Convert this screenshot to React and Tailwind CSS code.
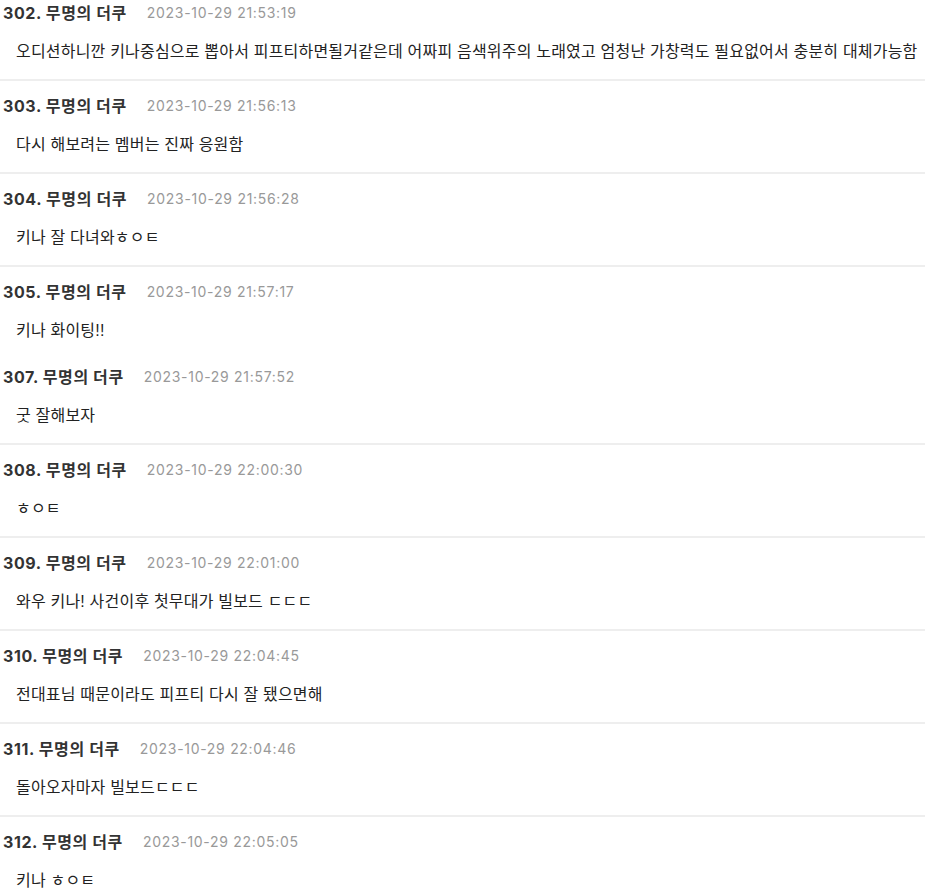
import React from "react";

const rows = [
  { n: 302, t: "2023-10-29 21:53:19", b: "오디션하니깐 키나중심으로 뽑아서 피프티하면될거같은데 어짜피 음색위주의 노래였고 엄청난 가창력도 필요없어서 충분히 대체가능함" },
  { n: 303, t: "2023-10-29 21:56:13", b: "다시 해보려는 멤버는 진짜 응원함" },
  { n: 304, t: "2023-10-29 21:56:28", b: "키나 잘 다녀와ㅎㅇㅌ" },
  { n: 305, t: "2023-10-29 21:57:17", b: "키나 화이팅!!", noBorder: true },
  { n: 307, t: "2023-10-29 21:57:52", b: "굿 잘해보자" },
  { n: 308, t: "2023-10-29 22:00:30", b: "ㅎㅇㅌ" },
  { n: 309, t: "2023-10-29 22:01:00", b: "와우 키나! 사건이후 첫무대가 빌보드 ㄷㄷㄷ" },
  { n: 310, t: "2023-10-29 22:04:45", b: "전대표님 때문이라도 피프티 다시 잘 됐으면해" },
  { n: 311, t: "2023-10-29 22:04:46", b: "돌아오자마자 빌보드ㄷㄷㄷ" },
  { n: 312, t: "2023-10-29 22:05:05", b: "키나 ㅎㅇㅌ" },
];

export default function App() {
  return (
    <div
      className="w-[925px] h-[893px] overflow-hidden bg-white"
      style={{ fontFamily: '"Liberation Sans", "Noto Sans CJK KR", sans-serif' }}
    >
      <div className="-mt-[12px]">
        {rows.map((r) => (
          <div
            key={r.n}
            className={
              r.noBorder
                ? "pt-[13px] pb-[9px]"
                : "pt-[13px] pb-[15px] border-b-2 border-[#eeeeee]"
            }
          >
            <div
              className="flex items-center h-[24px] pl-[3px]"
              style={{ fontFamily: 'Inter, "Noto Sans CJK KR", sans-serif' }}
            >
              <span className="text-[16px] font-bold text-[#333333] leading-[24px] tracking-[0.6px]">
                {r.n}. 무명의 더쿠
              </span>
              <span className="ml-[20px] text-[14px] text-[#999999] tracking-[0.7px] leading-[24px]">
                {r.t}
              </span>
            </div>
            <div className="mt-[15px] h-[24px] pl-[16px] text-[16px] text-[#222222] leading-[24px] tracking-[0.2px] whitespace-nowrap">
              {r.b}
            </div>
          </div>
        ))}
      </div>
    </div>
  );
}
